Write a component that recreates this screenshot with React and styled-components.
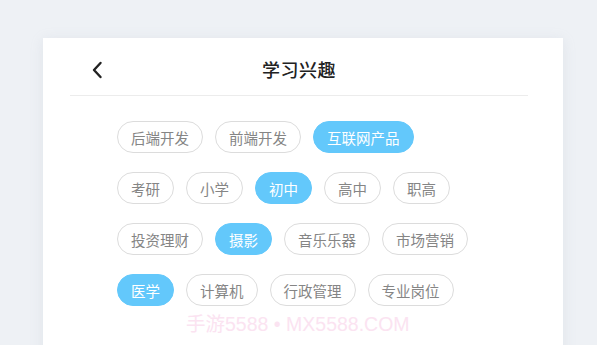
import styled, { createGlobalStyle } from "styled-components";

const GlobalStyle = createGlobalStyle`
  html, body {
    margin: 0;
    padding: 0;
    background: #eef1f5;
    font-family: "Noto Sans CJK SC", "Noto Sans", sans-serif;
  }
`;

const rows = [
  [["后端开发"], ["前端开发"], ["互联网产品", true]],
  [["考研"], ["小学"], ["初中", true], ["高中"], ["职高"]],
  [["投资理财"], ["摄影", true], ["音乐乐器"], ["市场营销"]],
  [["医学", true], ["计算机"], ["行政管理"], ["专业岗位"]],
];

const App = () => {
  return (
    <Page>
      <GlobalStyle />
      <Card>
        <Header>
          <Back>
            <svg width="12" height="18" viewBox="0 0 12 18">
              <path d="M9.5 2 L3 9 L9.5 16" fill="none" stroke="#222" strokeWidth="2.4" strokeLinecap="round" strokeLinejoin="round" />
            </svg>
          </Back>
          <Title>学习兴趣</Title>
        </Header>
        <Tags>
          {rows.map((row, i) => (
            <Row key={i}>
              {row.map(([label, active]) => (
                <Chip key={label} $active={active}>{label}</Chip>
              ))}
            </Row>
          ))}
        </Tags>
        <Watermark>手游5588 • MX5588.COM</Watermark>
      </Card>
    </Page>
  );
};

export default App;

const Page = styled.div`
  width: 597px;
  height: 345px;
  overflow: hidden;
  padding: 38px 0 0 43px;
  box-sizing: border-box;
`;

const Card = styled.div`
  width: 520px;
  height: 330px;
  background: #fff;
  box-shadow: 0 2px 12px rgba(160, 170, 190, 0.18);
  display: flex;
  flex-direction: column;
`;

const Header = styled.div`
  margin: 0 35px 0 27px;
  height: 57px;
  border-bottom: 1px solid #ececec;
  display: flex;
  align-items: center;
  justify-content: center;
  position: relative;
`;

const Back = styled.div`
  position: absolute;
  left: 21px;
  top: 23px;
  display: flex;
`;

const Title = styled.div`
  font-size: 18px;
  font-weight: 500;
  color: #222;
  letter-spacing: 0.5px;
  margin-top: 4px;
`;

const Tags = styled.div`
  padding: 25px 0 0 74px;
  display: flex;
  flex-direction: column;
  gap: 19px;
`;

const Row = styled.div`
  display: flex;
  gap: 12px;
`;

const Chip = styled.div`
  height: 32px;
  box-sizing: border-box;
  padding: 0 13px;
  border-radius: 16px;
  border: 1px solid ${(p) => (p.$active ? "#63c8fb" : "#dcdcdc")};
  background: ${(p) => (p.$active ? "#63c8fb" : "#fff")};
  color: ${(p) => (p.$active ? "#fff" : "#858585")};
  font-size: 14.5px;
  display: flex;
  align-items: center;
  white-space: nowrap;
`;

const Watermark = styled.div`
  margin: 2px 0 0 143px;
  font-family: "Liberation Sans", "Noto Sans CJK SC", sans-serif;
  font-size: 19.5px;
  color: #fbe3f1;
`;
